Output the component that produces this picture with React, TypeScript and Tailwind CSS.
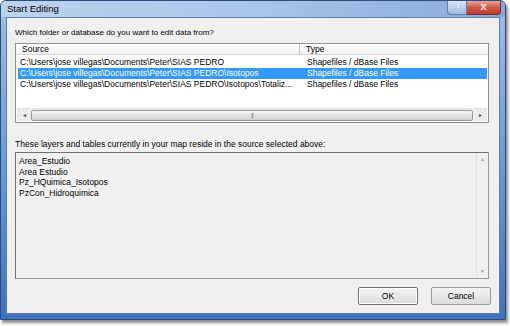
import React from 'react';

const ui = { fontFamily: '"Liberation Sans", Arial, sans-serif' };

const sources = [
  { path: 'C:\\Users\\jose villegas\\Documents\\Peter\\SIAS PEDRO', type: 'Shapefiles / dBase Files', selected: false },
  { path: 'C:\\Users\\jose villegas\\Documents\\Peter\\SIAS PEDRO\\Isotopos', type: 'Shapefiles / dBase Files', selected: true },
  { path: 'C:\\Users\\jose villegas\\Documents\\Peter\\SIAS PEDRO\\Isotopos\\Totaliz...', type: 'Shapefiles / dBase Files', selected: false },
];

const layers = ['Area_Estudio', 'Area Estudio', 'Pz_HQuimica_Isotopos', 'PzCon_Hidroquimica'];

export default function App() {
  return (
    <div className="w-[510px] h-[326px] bg-white overflow-hidden" style={ui}>
      <div className="w-[506px] h-[320px] rounded-t-[6px] border border-[#2d4c78] bg-gradient-to-b from-[#9fbfe6] via-[#6f9ad4] to-[#3f72bd] flex flex-col shadow-[2px_3px_3px_rgba(0,0,0,0.45)]">
        {/* title bar */}
        <div className="h-[16px] flex items-start rounded-t-[5px] bg-gradient-to-r from-[#bcd3ee] via-[#a9c5e8] to-[#86aadb]">
          <span className="pl-[6px] pt-[2px] text-[9.5px] leading-[12px] text-black">Start Editing</span>
          <div className="ml-auto mr-[4px] flex">
            <div className="w-[20px] h-[14px] rounded-bl-[4px] border border-[#5f7ea8] border-t-0 bg-gradient-to-b from-[#d7e5f6] to-[#9fbbe0] flex items-center justify-center text-[9px] font-bold text-white [text-shadow:0_0_1px_#4a6a98]">?</div>
            <div className="w-[34px] h-[14px] rounded-br-[4px] border border-[#7a2a24] border-t-0 border-l-0 bg-gradient-to-b from-[#e6a59b] via-[#cf5a4c] to-[#c0392b] flex items-center justify-center text-[9px] font-bold text-white">X</div>
          </div>
        </div>
        {/* client area */}
        <div className="mx-[5px] h-[297px] border border-[#5a7fb3] bg-[#f0f0f0] pl-[8px] pt-[10px] flex flex-col">
          <div className="text-[8px] leading-[10px] text-black">Which folder or database do you want to edit data from?</div>
          <div className="mt-[5px] w-[474px] h-[80px] border border-[#8d9299] bg-white flex flex-col">
            <div className="h-[11px] flex border-b border-[#d5d5d5] bg-gradient-to-b from-white to-[#f3f3f3] text-[8.5px] leading-[11px] text-black">
              <div className="w-[284px] pl-[6px] border-r border-[#c8c8c8]">Source</div>
              <div className="pl-[6px]">Type</div>
            </div>
            <div className="mt-[2px] flex flex-col">
              {sources.map((s) => (
                <div
                  key={s.path}
                  className={
                    'ml-[2px] mr-[1px] h-[11px] flex text-[8.5px] leading-[11px] ' +
                    (s.selected ? 'bg-[#3399ff] text-white' : 'text-black')
                  }
                >
                  <div className="w-[282px] pl-[2px] whitespace-nowrap overflow-hidden">{s.path}</div>
                  <div className="pl-[7px] whitespace-nowrap">{s.type}</div>
                </div>
              ))}
            </div>
            {/* horizontal scrollbar */}
            <div className="mt-auto mb-[1px] mx-[1px] h-[13px] flex items-center bg-[#ececec] border-t border-[#e2e2e2]">
              <div className="w-[14px] h-[12px] flex items-center justify-center text-[6px] text-[#444]">◂</div>
              <div className="flex-1 h-[11px] rounded-[2px] border border-[#9a9a9a] bg-gradient-to-b from-[#f6f6f6] via-[#e4e4e4] to-[#cfcfcf] flex items-center justify-center">
                <span className="text-[6px] leading-[6px] text-[#777] tracking-[-1px]">|||</span>
              </div>
              <div className="w-[14px] h-[12px] flex items-center justify-center text-[6px] text-[#444]">▸</div>
            </div>
          </div>
          <div className="mt-[16px] text-[8.5px] leading-[10px] text-black">These layers and tables currently in your map reside in the source selected above:</div>
          <div className="mt-[3px] w-[474px] h-[127px] border border-[#9a9a9a] border-l-[#6e6e6e] border-t-[#707070] bg-[#f0f0f0] flex">
            <div className="flex-1 pl-[3px] pt-[3px] flex flex-col">
              {layers.map((l) => (
                <div key={l} className="h-[10.5px] text-[8.5px] leading-[10.5px] text-black">{l}</div>
              ))}
            </div>
            <div className="w-[12px] border-l border-[#e0e0e0] flex flex-col items-center justify-between py-[3px] text-[5px] text-[#9a9a9a]">
              <span>▲</span>
              <span>▼</span>
            </div>
          </div>
          <div className="mt-[8px] flex">
            <div className="ml-[343px] w-[60px] h-[18px] border border-[#707070] rounded-[2px] bg-gradient-to-b from-[#f4f4f4] to-[#dcdcdc] shadow-[inset_0_0_0_1px_#ffffff] flex items-center justify-center text-[8.5px] text-black">OK</div>
            <div className="ml-[13px] w-[60px] h-[18px] border border-[#9a9a9a] rounded-[2px] bg-gradient-to-b from-[#f4f4f4] to-[#dcdcdc] flex items-center justify-center text-[8.5px] text-black">Cancel</div>
          </div>
        </div>
      </div>
    </div>
  );
}
